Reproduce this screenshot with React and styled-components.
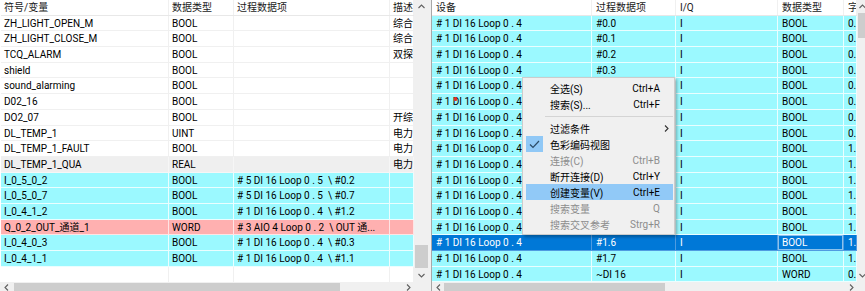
import React from 'react';
import styled, { createGlobalStyle } from 'styled-components';

const GlobalStyle = createGlobalStyle`
  html, body { margin: 0; padding: 0; overflow: hidden; background: #fff; }
  body {
    font-family: Roboto, "Noto Sans CJK SC", sans-serif;
    font-size: 10px;
    color: #000;
  }
`;

const ROW_H = '15.7px';
const CYAN = '#9bf9ff';
const PINK = '#ffb0b0';
const GRAY = '#efefef';
const SELECT = '#0078d7';

const LEFT_COLS = '168px 65px 156px 1fr';
const RIGHT_COLS = '160px 84px 102px 66px 1fr';

const Screen = styled.div`
  position: relative;
  display: flex;
  width: 865px;
  height: 297px;
  overflow: hidden;
  background: #fff;
`;

const Pane = styled.div`
  flex: none;
  width: ${p => p.$width}px;
  height: 100%;
  display: grid;
  grid-template-columns: 1fr ${p => p.$sb}px;
  grid-template-rows: 1fr 15px;
`;

const Splitter = styled.div`
  flex: none;
  width: 2px;
  background: #f0f0f0;
  border-right: 1px solid #a8a8a8;
`;

const Table = styled.div`
  display: flex;
  flex-direction: column;
  min-width: 0;
  overflow: hidden;
  padding-left: ${p => p.$inset || 0}px;
`;

const Row = styled.div`
  --line: ${p => p.$line || '#f0f0f0'};
  flex: 0 0 ${ROW_H};
  height: ${ROW_H};
  box-sizing: border-box;
  display: grid;
  grid-template-columns: ${p => p.$cols};
  background: ${p => p.$bg || '#fff'};
  color: ${p => p.$fg || '#000'};
  border-bottom: 1px solid var(--line);
`;

const HeaderRow = styled(Row)`
  color: #1a1a1a;
  border-bottom-color: #e8e8e8;
`;

const FillRow = styled(Row)`
  flex: 1 1 auto;
  height: auto;
  border-bottom: none;
`;

const Cell = styled.div`
  position: relative;
  padding: 1px ${p => p.$pad ?? 4}px 0;
  border-right: 1px solid var(--line);
  white-space: pre;
  overflow: hidden;
  line-height: 14px;
  ${p => p.$focus && 'box-shadow: inset 0 0 0 1px rgba(255, 255, 255, 0.55);'}
`;

const Marker = styled.span`
  position: absolute;
  left: 22px;
  top: 3px;
  width: 3px;
  height: 4px;
  background: #e0302a;
  border-radius: 1px;
`;

const VScroll = styled.div`
  display: flex;
  flex-direction: column;
  background: #f0f0f0;
`;

const HScroll = styled.div`
  display: flex;
  background: #f0f0f0;
`;

const Corner = styled.div`
  background: #f0f0f0;
`;

const Arrow = styled.div`
  flex: none;
  display: flex;
  justify-content: center;
  align-items: ${p => (p.$horizontal ? 'flex-start' : 'center')};
  padding-top: ${p => (p.$horizontal ? '2px' : '0')};
  box-sizing: border-box;
  width: ${p => (p.$horizontal ? '12px' : 'auto')};
  height: ${p => (p.$horizontal ? '100%' : '13px')};
`;

const Track = styled.div`
  flex: 1;
  display: flex;
  flex-direction: ${p => (p.$horizontal ? 'row' : 'column')};
  min-width: 0;
  min-height: 0;
`;

const Thumb = styled.div`
  flex: none;
  background: #cdcdcd;
  ${p =>
    p.$horizontal
      ? `height: 100%; margin: 1px 0 0 ${p.$offset}px; width: ${p.$size}px;`
      : `width: auto; margin: ${p.$offset}px 1px 0 ${p.$side}px; height: ${p.$size}px;`}
`;

const Menu = styled.div`
  position: absolute;
  left: 522px;
  top: 77px;
  width: 153px;
  box-sizing: border-box;
  padding: 2px 0;
  background: #f0f0f0;
  border: 1px solid #cccccc;
  box-shadow: 2px 2px 3px rgba(0, 0, 0, 0.3);
`;

const MenuItem = styled.div`
  display: flex;
  align-items: center;
  height: 16px;
  margin: 0 1px 0 3px;
  background: ${p => (p.$active ? '#91c9f7' : 'transparent')};
  color: ${p => (p.$disabled ? '#8d8d8d' : '#000')};
  white-space: nowrap;
`;

const CheckBox = styled.div`
  flex: none;
  width: 17px;
  height: 16px;
  display: flex;
  align-items: center;
  justify-content: center;
  background: ${p => (p.$on ? '#90c8f6' : 'transparent')};
`;

const ItemLabel = styled.span`
  flex: 1;
  margin-left: 7px;
`;

const Shortcut = styled.span`
  flex: none;
`;

const Trail = styled.div`
  flex: none;
  width: 13px;
  display: flex;
  justify-content: center;
  align-items: center;
`;

const MenuSeparator = styled.div`
  height: 8px;
  display: flex;
  align-items: center;
  padding: 0 1px 0 22px;
  &::after {
    content: '';
    flex: 1;
    height: 1px;
    background: #d4d4d4;
  }
`;

const Chevron = ({ dir, color = '#606060' }) => {
  const pts = {
    up: '0.5,4 3.5,1 6.5,4',
    down: '0.5,1 3.5,4 6.5,1',
    left: '4,0.5 1,3.5 4,6.5',
    right: '1,0.5 4,3.5 1,6.5',
  }[dir];
  const vertical = dir === 'up' || dir === 'down';
  return (
    <svg width={vertical ? 7 : 5} height={vertical ? 5 : 7} viewBox={vertical ? '0 0 7 5' : '0 0 5 7'}>
      <polyline points={pts} fill="none" stroke={color} strokeWidth="1.1" />
    </svg>
  );
};

const CheckMark = () => (
  <svg width="11" height="9" viewBox="0 0 11 9">
    <polyline points="1,4.5 4,7.5 10,1" fill="none" stroke="#2b4a66" strokeWidth="1.2" />
  </svg>
);

const VBar = ({ offset, size, side = 1 }) => (
  <VScroll>
    <Arrow><Chevron dir="up" /></Arrow>
    <Track>
      <Thumb $offset={offset} $size={size} $side={side} />
    </Track>
    <Arrow><Chevron dir="down" /></Arrow>
  </VScroll>
);

const HBar = ({ offset, size }) => (
  <HScroll>
    <Arrow $horizontal><Chevron dir="left" /></Arrow>
    <Track $horizontal>
      <Thumb $horizontal $offset={offset} $size={size} />
    </Track>
    <Arrow $horizontal><Chevron dir="right" /></Arrow>
  </HScroll>
);

const tones = {
  white: { bg: '#fff', line: '#f0f0f0' },
  gray: { bg: GRAY, line: '#f6f6f6' },
  cyan: { bg: CYAN, line: '#eafeff' },
  pink: { bg: PINK, line: '#ffe4e4' },
  selected: { bg: SELECT, line: '#4f9be0', fg: '#fff' },
};

const leftRows = [
  ['ZH_LIGHT_OPEN_M', 'BOOL', '', '综合照明开启'],
  ['ZH_LIGHT_CLOSE_M', 'BOOL', '', '综合照明关闭'],
  ['TCQ_ALARM', 'BOOL', '', '双探测器报警'],
  ['shield', 'BOOL', '', ''],
  ['sound_alarming', 'BOOL', '', ''],
  ['D02_16', 'BOOL', '', ''],
  ['DO2_07', 'BOOL', '', '开综合照明'],
  ['DL_TEMP_1', 'UINT', '', '电力温度'],
  ['DL_TEMP_1_FAULT', 'BOOL', '', '电力温度故障'],
  ['DL_TEMP_1_QUA', 'REAL', '', '电力温度质量', 'gray'],
  ['I_0_5_0_2', 'BOOL', '# 5 DI 16 Loop 0 . 5  \\ #0.2', '', 'cyan'],
  ['I_0_5_0_7', 'BOOL', '# 5 DI 16 Loop 0 . 5  \\ #0.7', '', 'cyan'],
  ['I_0_4_1_2', 'BOOL', '# 1 DI 16 Loop 0 . 4  \\ #1.2', '', 'cyan'],
  ['Q_0_2_OUT_通道_1', 'WORD', '# 3 AIO 4 Loop 0 . 2  \\ OUT 通...', '', 'pink'],
  ['I_0_4_0_3', 'BOOL', '# 1 DI 16 Loop 0 . 4  \\ #0.3', '', 'cyan'],
  ['I_0_4_1_1', 'BOOL', '# 1 DI 16 Loop 0 . 4  \\ #1.1', '', 'cyan'],
];

const rightRows = Array.from({ length: 17 }, (_, i) => ({
  device: '# 1 DI 16 Loop 0 . 4',
  item: i < 8 ? `#0.${i}` : i < 16 ? `#1.${i - 8}` : '~DI 16',
  io: 'I',
  type: i === 16 ? 'WORD' : 'BOOL',
  byte: i < 8 || i === 16 ? '0.0' : '1.0',
  tone: i === 14 ? 'selected' : 'cyan',
  mark: i === 5,
}));

const menuItems = [
  { label: '全选(S)', key: 'Ctrl+A' },
  { label: '搜索(S)...', key: 'Ctrl+F' },
  { sep: true },
  { label: '过滤条件', submenu: true },
  { label: '色彩编码视图', checked: true },
  { label: '连接(C)', key: 'Ctrl+B', disabled: true },
  { label: '断开连接(D)', key: 'Ctrl+Y' },
  { label: '创建变量(V)', key: 'Ctrl+E', active: true },
  { label: '搜索变量', key: 'Q', disabled: true },
  { label: '搜索交叉参考', key: 'Strg+R', disabled: true },
];

const ContextMenu = () => (
  <Menu>
    {menuItems.map((m, i) =>
      m.sep ? (
        <MenuSeparator key={i} />
      ) : (
        <MenuItem key={i} $active={m.active} $disabled={m.disabled}>
          <CheckBox $on={m.checked}>{m.checked && <CheckMark />}</CheckBox>
          <ItemLabel>{m.label}</ItemLabel>
          {m.key && <Shortcut>{m.key}</Shortcut>}
          <Trail>{m.submenu && <Chevron dir="right" color="#333" />}</Trail>
        </MenuItem>
      )
    )}
  </Menu>
);

export default function App() {
  return (
    <>
      <GlobalStyle />
      <Screen>
        <Pane $width={429} $sb={15}>
          <Table $inset={1}>
            <HeaderRow $cols={LEFT_COLS}>
              <Cell $pad={3}>符号/变量</Cell>
              <Cell $pad={3}>数据类型</Cell>
              <Cell $pad={3}>过程数据项</Cell>
              <Cell $pad={3}>描述</Cell>
            </HeaderRow>
            {leftRows.map(([name, type, item, desc, tone = 'white']) => (
              <Row key={name} $cols={LEFT_COLS} $bg={tones[tone].bg} $line={tones[tone].line}>
                <Cell $pad={3}>{name}</Cell>
                <Cell $pad={3}>{type}</Cell>
                <Cell $pad={3}>{item}</Cell>
                <Cell $pad={3}>{desc}</Cell>
              </Row>
            ))}
            <FillRow $cols={LEFT_COLS}>
              <Cell />
              <Cell />
              <Cell />
              <Cell />
            </FillRow>
          </Table>
          <VBar offset={232} size={23} side={1} />
          <HBar offset={2} size={326} />
          <Corner />
        </Pane>
        <Splitter />
        <Pane $width={436} $sb={11}>
          <Table>
            <HeaderRow $cols={RIGHT_COLS}>
              <Cell>设备</Cell>
              <Cell>过程数据项</Cell>
              <Cell>I/Q</Cell>
              <Cell>数据类型</Cell>
              <Cell>字节偏移</Cell>
            </HeaderRow>
            {rightRows.map((r, i) => {
              const t = tones[r.tone];
              return (
                <Row key={i} $cols={RIGHT_COLS} $bg={t.bg} $line={t.line} $fg={t.fg}>
                  <Cell>
                    {r.device}
                    {r.mark && <Marker />}
                  </Cell>
                  <Cell>{r.item}</Cell>
                  <Cell>{r.io}</Cell>
                  <Cell $focus={r.tone === 'selected'}>{r.type}</Cell>
                  <Cell>{r.byte}</Cell>
                </Row>
              );
            })}
          </Table>
          <VBar offset={0} size={25} side={1} />
          <HBar offset={0} size={221} />
          <Corner />
        </Pane>
        <ContextMenu />
      </Screen>
    </>
  );
}
